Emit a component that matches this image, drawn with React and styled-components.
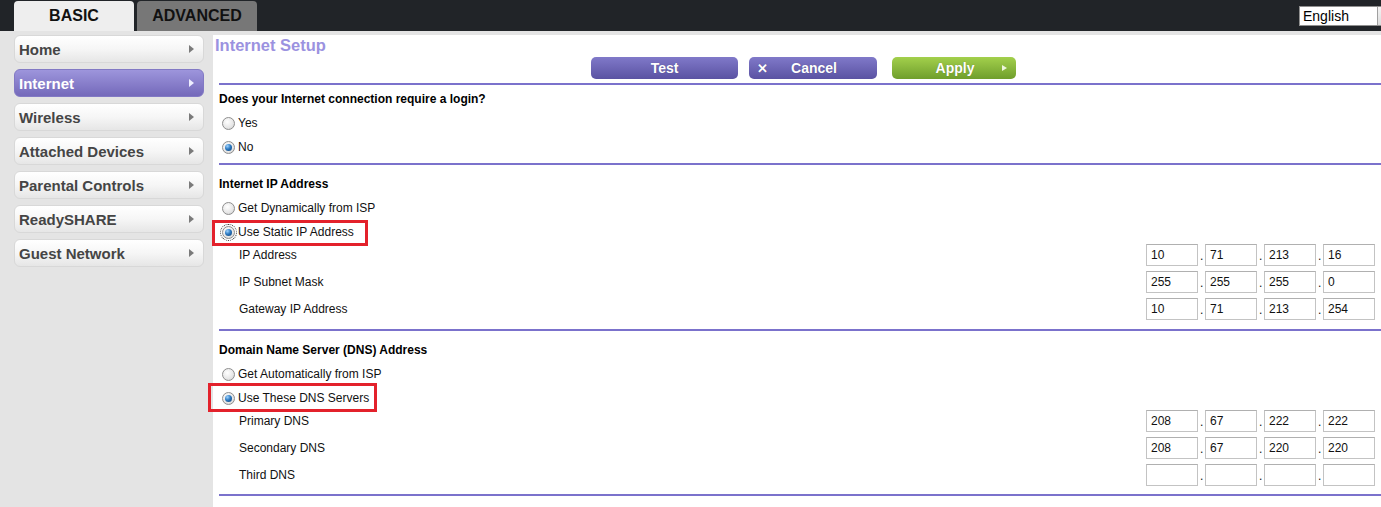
import React from "react";
import styled, { createGlobalStyle, css } from "styled-components";

const Global = createGlobalStyle`
  html, body { margin: 0; padding: 0; background: #fff; overflow: hidden; }
  body { font-family: "Liberation Sans", Arial, sans-serif; }
  * { box-sizing: border-box; }
`;

const Page = styled.div`
  width: 1381px;
  height: 507px;
  overflow: hidden;
  display: flex;
  flex-direction: column;
  background: #fff;
`;

const TopBar = styled.div`
  height: 31px;
  background: #212428;
  display: flex;
  align-items: flex-end;
  padding-left: 14px;
  gap: 3px;
  position: relative;
  flex-shrink: 0;
`;

const Tab = styled.div`
  width: 120px;
  height: 30px;
  border-radius: 4px 4px 0 0;
  display: flex;
  align-items: center;
  justify-content: center;
  font-weight: bold;
  font-size: 16px;
  color: #111;
  background: ${(p) => (p.$active ? "#eeeeee" : "#777777")};
`;

const LangSelect = styled.div`
  position: absolute;
  left: 1299px;
  top: 6px;
  width: 100px;
  height: 20px;
  background: #fff;
  border: 1px solid #8f8f8f;
  font-size: 14px;
  color: #000;
  display: flex;
  align-items: center;
  padding-left: 3px;
`;

const SelectBtn = styled.span`
  position: absolute;
  left: 77px;
  top: 0;
  width: 20px;
  height: 18px;
  background: linear-gradient(#f4f4f4, #dcdcdc);
  border-left: 1px solid #a0a0a0;
`;

const Strip = styled.div`
  height: 4px;
  background: #e4e4e4;
  flex-shrink: 0;
`;

const Body = styled.div`
  flex: 1;
  display: flex;
`;

const Sidebar = styled.nav`
  width: 213px;
  flex-shrink: 0;
  background: #e4e4e4;
  display: flex;
  flex-direction: column;
  gap: 6px;
  padding: 0 0 0 14px;
`;

const MenuItem = styled.div`
  width: 190px;
  height: 28px;
  border-radius: 6px;
  display: flex;
  align-items: center;
  justify-content: space-between;
  padding: 0 9px 0 4px;
  font-weight: bold;
  font-size: 15px;
  ${(p) =>
    p.$active
      ? css`
          color: #fff;
          background: linear-gradient(#9d95dc, #7469ba);
          border: 1px solid #8279c4;
        `
      : css`
          color: #454545;
          background: linear-gradient(#ffffff 0%, #f6f6f6 50%, #e6e6e6 100%);
          border: 1px solid #d8d8d8;
        `}
`;

const Arrow = styled.span`
  width: 0;
  height: 0;
  border-top: 4px solid transparent;
  border-bottom: 4px solid transparent;
  border-left: 5px solid ${(p) => (p.$light ? "#eeeeff" : "#7a7a7a")};
`;

const Content = styled.main`
  flex: 1;
  display: flex;
  flex-direction: column;
  padding-left: 6px;
`;

const Title = styled.h1`
  margin: 0;
  font-size: 16.5px;
  font-weight: bold;
  color: #9b92e0;
  height: 19px;
  line-height: 19px;
  margin-left: -4px;
  padding-top: 1px;
`;

const ButtonRow = styled.div`
  display: flex;
  align-items: center;
  padding-left: 372px;
  margin-top: 3px;
  height: 22px;
`;

const Button = styled.div`
  height: 22px;
  width: ${(p) => p.$w}px;
  margin-left: ${(p) => p.$ml || 0}px;
  border-radius: 5px;
  display: flex;
  align-items: center;
  justify-content: center;
  position: relative;
  font-size: 14px;
  font-weight: bold;
  color: #fff;
  text-shadow: 0 0 1px rgba(0, 0, 0, 0.3);
  background: ${(p) =>
    p.$green
      ? "linear-gradient(#a3d04c, #6f9e2c)"
      : "linear-gradient(#8079c9, #5a52a2)"};
  padding-left: ${(p) => p.$pl || 0}px;
`;

const ButtonIcon = styled.span`
  position: absolute;
  left: ${(p) => p.$left}px;
  top: 50%;
  transform: translateY(-50%);
  font-size: 13px;
  font-weight: bold;
  color: #fff;
  line-height: 1;
`;

const ApplyArrow = styled.span`
  position: absolute;
  right: 9px;
  top: 8px;
  width: 0;
  height: 0;
  border-top: 3.5px solid transparent;
  border-bottom: 3.5px solid transparent;
  border-left: 5px solid #eef6dc;
`;

const Divider = styled.div`
  height: 2px;
  background: #7b72cc;
  margin-top: ${(p) => p.$mt || 0}px;
`;

const Section = styled.section`
  display: flex;
  flex-direction: column;
  padding-top: ${(p) => p.$pt || 0}px;
`;

const Heading = styled.div`
  height: 24px;
  display: flex;
  align-items: center;
  font-size: 12px;
  font-weight: bold;
  color: #000;
`;

const RadioRow = styled.label`
  height: 24px;
  display: flex;
  align-items: center;
  gap: 3px;
  padding-left: 3px;
  font-size: 12px;
  color: #111;
  position: relative;
`;

const Radio = styled.span`
  width: 13px;
  height: 13px;
  border-radius: 50%;
  border: 1px solid #8e8e8e;
  background: radial-gradient(circle at 40% 35%, #ffffff 0%, #e6e6e6 60%, #c8c8c8 100%);
  display: flex;
  align-items: center;
  justify-content: center;
  flex-shrink: 0;
  ${(p) =>
    p.$focus &&
    css`
      outline: 1px dotted #333;
      outline-offset: 1px;
    `}
  &::after {
    content: "";
    display: ${(p) => (p.$checked ? "block" : "none")};
    width: 7px;
    height: 7px;
    border-radius: 50%;
    background: radial-gradient(circle at 35% 30%, #9fd4ff 0%, #2d7ac2 45%, #0d3d70 100%);
  }
`;

const Highlight = styled.span`
  position: absolute;
  left: ${(p) => p.$left}px;
  top: ${(p) => p.$top}px;
  width: ${(p) => p.$w}px;
  height: ${(p) => p.$h}px;
  border: 3px solid #e3212b;
  pointer-events: none;
`;

const Fields = styled.div`
  display: flex;
  flex-direction: column;
  margin-top: -3px;
`;

const FieldRow = styled.div`
  height: 27px;
  display: flex;
  align-items: center;
  justify-content: space-between;
  padding: 0 6px 0 20px;
  font-size: 12px;
  color: #111;
`;

const IpGroup = styled.div`
  display: flex;
  align-items: center;
`;

const Octet = styled.div`
  width: 52px;
  height: 22px;
  border: 1px solid #c3c3c3;
  border-top-color: #b0b0b0;
  background: #fff;
  font-size: 12px;
  color: #111;
  display: flex;
  align-items: center;
  padding-left: 4px;
`;

const Dot = styled.span`
  width: 7px;
  font-size: 12px;
  color: #111;
  align-self: flex-end;
  padding: 0 0 4px 2px;
  line-height: 1;
`;

function Ip({ values }) {
  return (
    <IpGroup>
      {values.map((v, i) => (
        <React.Fragment key={i}>
          {i > 0 && <Dot>.</Dot>}
          <Octet>{v}</Octet>
        </React.Fragment>
      ))}
    </IpGroup>
  );
}

const menu = [
  "Home",
  "Internet",
  "Wireless",
  "Attached Devices",
  "Parental Controls",
  "ReadySHARE",
  "Guest Network",
];

export default function App() {
  return (
    <Page>
      <Global />
      <TopBar>
        <Tab $active>BASIC</Tab>
        <Tab>ADVANCED</Tab>
        <LangSelect>
          English
          <SelectBtn />
        </LangSelect>
      </TopBar>
      <Strip />
      <Body>
        <Sidebar>
          {menu.map((m) => (
            <MenuItem key={m} $active={m === "Internet"}>
              {m}
              <Arrow $light={m === "Internet"} />
            </MenuItem>
          ))}
        </Sidebar>
        <Content>
          <Title>Internet Setup</Title>
          <ButtonRow>
            <Button $w={147}>Test</Button>
            <Button $w={128} $ml={11} $pl={2}>
              <ButtonIcon $left={8}>✕</ButtonIcon>
              Cancel
            </Button>
            <Button $w={124} $ml={15} $green $pl={2}>
              Apply
              <ApplyArrow />
            </Button>
          </ButtonRow>
          <Divider $mt={4} />

          <Section $pt={2}>
            <Heading>Does your Internet connection require a login?</Heading>
            <RadioRow>
              <Radio />
              Yes
            </RadioRow>
            <RadioRow>
              <Radio $checked />
              No
            </RadioRow>
          </Section>
          <Divider $mt={4} />

          <Section $pt={7}>
            <Heading>Internet IP Address</Heading>
            <RadioRow>
              <Radio />
              Get Dynamically from ISP
            </RadioRow>
            <RadioRow>
              <Radio $checked $focus />
              Use Static IP Address
              <Highlight $left={-7} $top={0} $w={156} $h={26} />
            </RadioRow>
            <Fields>
              <FieldRow>
                IP Address
                <Ip values={["10", "71", "213", "16"]} />
              </FieldRow>
              <FieldRow>
                IP Subnet Mask
                <Ip values={["255", "255", "255", "0"]} />
              </FieldRow>
              <FieldRow>
                Gateway IP Address
                <Ip values={["10", "71", "213", "254"]} />
              </FieldRow>
            </Fields>
          </Section>
          <Divider $mt={7} />

          <Section $pt={7}>
            <Heading>Domain Name Server (DNS) Address</Heading>
            <RadioRow>
              <Radio />
              Get Automatically from ISP
            </RadioRow>
            <RadioRow>
              <Radio $checked />
              Use These DNS Servers
              <Highlight $left={-11} $top={-3} $w={169} $h={29} />
            </RadioRow>
            <Fields>
              <FieldRow>
                Primary DNS
                <Ip values={["208", "67", "222", "222"]} />
              </FieldRow>
              <FieldRow>
                Secondary DNS
                <Ip values={["208", "67", "220", "220"]} />
              </FieldRow>
              <FieldRow>
                Third DNS
                <Ip values={["", "", "", ""]} />
              </FieldRow>
            </Fields>
          </Section>
          <Divider $mt={6} />
        </Content>
      </Body>
    </Page>
  );
}
